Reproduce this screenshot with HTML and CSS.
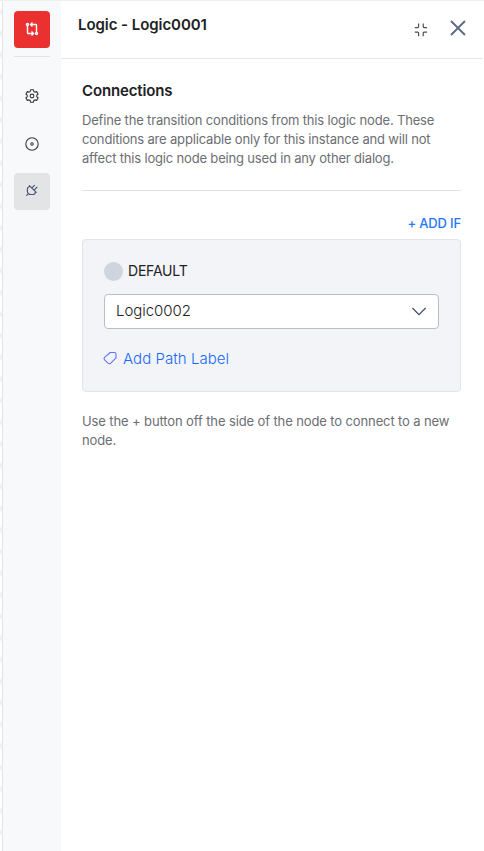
FILE: index.html
```html
<!DOCTYPE html>
<html lang="en">
<head>
<meta charset="utf-8">
<title>Logic - Logic0001</title>
<link rel="stylesheet" href="styles.css">
</head>
<body>
<div class="app">
  <div class="canvas-edge"></div>
  <nav class="rail">
    <div class="node-type">
      <svg width="16" height="16" viewBox="0 0 16 16" fill="none" stroke="#fff" stroke-width="1.4">
        <circle cx="3.500" cy="3.500" r="1"/><circle cx="12.500" cy="12.500" r="1"/>
        <path d="M3.500 4.500v7.500q0 .5.500.5h5.500M7.500 10.500l2 2-2 2M12.500 11.500V4q0-.5-.500-.5H6.500M8.500 1.500l-2 2 2 2"/>
      </svg>
    </div>
    <div class="rail-line"></div>
    <button class="tab" aria-label="Settings">
      <svg width="14" height="14" viewBox="0 0 14 14" fill="none" stroke="#343942" stroke-width="1.1" stroke-linejoin="round">
        <path d="M5.6.7h2.8l.4 1.8 1.1.65 1.8-.55 1.4 2.4L11.75 6.3v1.4l1.35 1.3-1.4 2.4-1.8-.55-1.1.65-.4 1.8H5.6l-.4-1.8-1.1-.65-1.8.55L.9 9l1.35-1.3V6.3L.9 5l1.4-2.4 1.8.55 1.1-.65z"/>
        <circle cx="7" cy="7" r="1.9"/>
      </svg>
    </button>
    <button class="tab" aria-label="Instance">
      <svg width="14" height="14" viewBox="0 0 14 14" fill="none" stroke="#343942" stroke-width="1.1">
        <circle cx="7" cy="7" r="6.2"/><circle cx="7" cy="7" r="1.2"/>
      </svg>
    </button>
    <button class="tab active" aria-label="Connections">
      <svg width="14" height="14" viewBox="0 0 14 14" fill="none" stroke="#4b5674" stroke-width="1.200" stroke-linecap="round" stroke-linejoin="round">
        <path d="M4.400 2.600l6.800 6.800M5 3.200L3.200 4.200Q2.300 5 2.400 6.500V8.500Q2.500 10 3.600 10.800Q4.500 11.600 6 11.500H8Q9.200 11.500 9.800 10.600L10.600 8.800M3.400 10.600l-1.700 1.700M7.200 4.600L9.400 2.400M9.400 6.800l2.600-2.600"/>
      </svg>
    </button>
  </nav>
  <main class="panel">
    <header class="head">
      <h1>Logic - Logic0001</h1>
      <svg class="shrink" width="14" height="14" viewBox="0 0 14 14" fill="none" stroke="#4b4d52" stroke-width="1.2">
        <path d="M4.6.5v3.1q0 1-1 1H.8M9.2.5v3.1q0 1 1 1h2.9M4.6 13.2v-3.1q0-1-1-1H.8M9.2 13.2v-3.1q0-1 1-1h2.9"/>
      </svg>
      <svg class="close" width="16" height="16" viewBox="0 0 16 16" fill="none" stroke="#5f6b84" stroke-width="1.9">
        <path d="M1 1l14 14M15 1L1 15"/>
      </svg>
    </header>
    <section class="body">
      <h2>Connections</h2>
      <p class="desc">Define the transition conditions from this logic node. These conditions are applicable only for this instance and will not affect this logic node being used in any other dialog.</p>
      <div class="add-if">+ ADD IF</div>
      <div class="card">
        <div class="default"><span class="dot"></span><span>DEFAULT</span></div>
        <div class="select">
          <span>Logic0002</span>
          <svg width="16" height="9" viewBox="0 0 16 9" fill="none" stroke="#3c4961" stroke-width="1.15"><path d="M1.4 1L8 7.6 14.6 1"/></svg>
        </div>
        <div class="path-label">
          <svg width="14" height="14" viewBox="0 0 14 14" fill="none" stroke="#5f74ff" stroke-width="1.1" stroke-linejoin="round"><path d="M7.200 1.500H11.500q1.500 0 1.500 1.500V6.800L7.800 12.200Q6.400 13.500 5 12.200L1.600 8.800Q.4 7.600 1.600 6.400z"/></svg>
          <span>Add Path Label</span>
        </div>
      </div>
      <p class="desc hint">Use the + button off the side of the node to connect to a new node.</p>
    </section>
  </main>
</div>
</body>
</html>
```
FILE: styles.css
```css
* { box-sizing: border-box; }
body { margin: 0; background: #fff; font-family: Inter, "Liberation Sans", sans-serif; color: #202124; }
h1, h2, p { margin: 0; }
svg { display: block; flex: none; }
.app { display: flex; width: 484px; height: 851px; border-top: 1px solid #eeeff0; overflow: hidden; }
.canvas-edge { width: 3px; flex: none; border-right: 1px solid #e3e4e7; background: radial-gradient(circle at 0 10.800px, #eeeff1 1px, #fff 4px) 0 0 / 3px 21.600px; }
.rail { width: 58px; flex: none; background: #f8f9fb; padding-top: 10px; display: flex; flex-direction: column; align-items: center; }
.node-type { width: 36px; height: 37px; border-radius: 4px; background: #eb3030; display: flex; align-items: center; justify-content: center; padding-bottom: 2px; }
.rail-line { width: 36px; height: 1px; background: #e1e3e6; margin: 8px 0 20px; }
.tab { width: 36px; height: 37px; border: 0; padding: 0; border-radius: 4px; background: none; margin-bottom: 11px; display: flex; align-items: center; justify-content: center; }
.tab.active { background: #e3e4e6; padding-bottom: 3px; }
.panel { flex: 1; min-width: 0; background: #fff; }
.head { height: 58px; margin-right: 1px; border-bottom: 1px solid #e4e5e7; display: flex; align-items: flex-start; padding: 14px 17px 0 17px; }
h1 { font-size: 15px; line-height: 20px; font-weight: 600; flex: 1; letter-spacing: -.06px; }
.shrink { margin: 8px 22px 0 0; }
.close { margin-top: 5px; }
.body { padding: 22px 23px 0 21px; }
h2 { font-size: 15px; line-height: 20px; font-weight: 600; letter-spacing: -.14px; }
.desc { font-size: 13px; line-height: 19px; color: #6b6e73; letter-spacing: -.175px; }
h2 + .desc { margin-top: 10px; padding-bottom: 22px; border-bottom: 1px solid #e1e2e4; }
.add-if { margin-top: 23px; font-size: 13px; line-height: 18px; font-weight: 500; color: #2478f8; text-align: right; letter-spacing: -.15px; }
.card { margin-top: 7px; height: 153px; padding: 21px; border: 1px solid #e2e4e7; border-radius: 4px; background: #f3f4f8; }
.default { height: 20px; display: flex; align-items: center; gap: 5px; font-size: 14px; letter-spacing: -.2px; }
.default span:last-child { padding-bottom: 1px; }
.dot { width: 19px; height: 19px; border-radius: 50%; background: #d0d4de; }
.select { margin-top: 13px; height: 35px; padding: 0 11px 1px; border: 1px solid #b9bec6; border-radius: 4px; background: #fff; display: flex; align-items: center; justify-content: space-between; font-size: 15px; font-weight: 300; letter-spacing: -.05px; }
.select span { padding-bottom: 1px; }
.path-label { margin-top: 19px; height: 20px; display: flex; align-items: center; gap: 6px; margin-left: -1px; font-size: 15px; font-weight: 300; letter-spacing: .05px; color: #1769fa; }
.hint { margin-top: 20px; letter-spacing: -.115px; }
```
